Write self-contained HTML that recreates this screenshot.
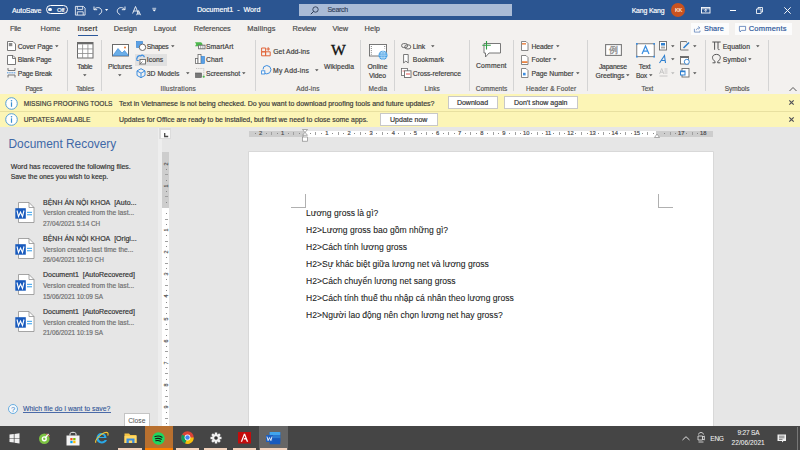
<!DOCTYPE html>
<html><head><meta charset="utf-8"><style>
html,body{margin:0;padding:0;width:800px;height:450px;overflow:hidden;background:#e6e6e6;font-family:"Liberation Sans", sans-serif;}
.t{position:absolute;white-space:nowrap;font-family:"Liberation Sans", sans-serif;-webkit-text-stroke:0.18px currentColor;}
svg{overflow:visible}
</style></head><body>

<div style="position:absolute;left:0px;top:0px;width:800px;height:20px;background:#2b5591;"></div>
<div class="t" style="left:12.1px;top:4.50px;height:11px;line-height:11px;font-size:7px;color:#ffffff;letter-spacing:-0.157px;">AutoSave</div>
<div style="position:absolute;left:45.6px;top:4.6px;width:22.5px;height:9.4px;box-sizing:border-box;border:1px solid #fff;border-radius:5px;"></div>
<div style="position:absolute;left:48.4px;top:7.7px;width:3.4px;height:3.4px;background:#fff;border-radius:50%;"></div>
<div class="t" style="left:56.9px;top:4.60px;height:10px;line-height:10px;font-size:6px;color:#ffffff;letter-spacing:-0.131px;">Off</div>
<svg style="position:absolute;left:75px;top:6px;" width="10.5" height="9.5" viewBox="0 0 10.5 9.5"><path d="M0.4 0.4h8l1.7 1.7v7h-9.7z M2.3 0.4v3h5.4v-3 M2.3 9.1v-3.3h5.9v3.3" fill="none" stroke="#fff" stroke-width="0.8"/></svg>
<svg style="position:absolute;left:92.5px;top:6px;" width="10" height="9" viewBox="0 0 10 9"><path d="M1 0.5v3.2h3.2 M1.2 3.5C2.5 1.5 6 0.8 7.8 2.8c1.8 2 0.8 4.8-2 5.8" fill="none" stroke="#fff" stroke-width="0.9"/></svg>
<svg style="position:absolute;left:105.2px;top:9px;" width="3.5" height="2.5" viewBox="0 0 3.5 2.5"><path d="M0 0h3.2l-1.6 2z" fill="#fff"/></svg>
<svg style="position:absolute;left:115.8px;top:6px;" width="10" height="9" viewBox="0 0 10 9"><path d="M9 0.5v3.2h-3.2 M8.8 3.5C7.5 1.5 4 0.8 2.2 2.8c-1.8 2-0.8 4.8 2 5.8" fill="none" stroke="#fff" stroke-width="0.9"/></svg>
<svg style="position:absolute;left:131.8px;top:6px;" width="9.5" height="9.5" viewBox="0 0 9.5 9.5"><path d="M0.6 7.5l2.9-7 2.9 7 M1.6 5h3.8 M4.6 9.2l2-4.6 2 4.6 M5.3 8h2.6" fill="none" stroke="#fff" stroke-width="0.85"/></svg>
<svg style="position:absolute;left:151.6px;top:8.4px;" width="4.5" height="3.6" viewBox="0 0 4.5 3.6"><path d="M0.3 0.3h3.9" stroke="#fff" stroke-width="0.7"/><path d="M0.3 1.5h3.9l-1.95 2z" fill="#fff"/></svg>
<div class="t" style="left:197px;top:4.50px;height:11px;line-height:11px;font-size:7.1px;color:#ffffff;">Document1&nbsp; -&nbsp; Word</div>
<div style="position:absolute;left:298.8px;top:3.5px;width:213.2px;height:12.5px;background:#a9bbd6;"></div>
<svg style="position:absolute;left:309.5px;top:5.5px;" width="9" height="9" viewBox="0 0 9 9"><circle cx="5.5" cy="3.5" r="2.7" fill="none" stroke="#2b3a55" stroke-width="0.9"/><path d="M3.6 5.4l-2.8 2.8" stroke="#2b3a55" stroke-width="1"/></svg>
<div class="t" style="left:327.5px;top:4.10px;height:11px;line-height:11px;font-size:7px;color:#34445f;letter-spacing:-0.313px;">Search</div>
<div class="t" style="left:631.7px;top:4.60px;height:11px;line-height:11px;font-size:6.9px;color:#ffffff;letter-spacing:-0.161px;">Kang Kang</div>
<div style="position:absolute;left:671.4px;top:3.1px;width:14px;height:14px;border-radius:50%;background:#c9521f;"></div>
<div class="t" style="left:675px;top:5.90px;height:9px;line-height:9px;font-size:5.6px;color:#ffe8dc;letter-spacing:-0.235px;">KK</div>
<svg style="position:absolute;left:701px;top:6.8px;" width="9.5" height="6.5" viewBox="0 0 9.5 6.5"><rect x="0.5" y="0.5" width="8.5" height="5.5" fill="none" stroke="#fff" stroke-width="0.9"/><path d="M0.5 1.8h8.5 M4.75 2.3v2.8 M3.4 3.6l1.35-1.3 1.35 1.3" fill="none" stroke="#fff" stroke-width="0.8"/></svg>
<div style="position:absolute;left:729.5px;top:9.6px;width:6.8px;height:0.9px;background:#fff;"></div>
<svg style="position:absolute;left:756px;top:6.8px;" width="7" height="7" viewBox="0 0 7 7"><path d="M0.5 2h4.5v4.5h-4.5z M2 2v-1.5h4.5v4.5h-1.5" fill="none" stroke="#fff" stroke-width="0.85"/></svg>
<svg style="position:absolute;left:783.5px;top:6.8px;" width="7" height="7" viewBox="0 0 7 7"><path d="M0.3 0.3l6.4 6.4 M6.7 0.3l-6.4 6.4" stroke="#fff" stroke-width="0.95"/></svg>
<div style="position:absolute;left:0px;top:20px;width:800px;height:74px;background:#f3f1ef;"></div>
<div class="t" style="left:10px;top:23.30px;height:12px;line-height:12px;font-size:7.4px;color:#4a4a4a;letter-spacing:-0.294px;">File</div>
<div class="t" style="left:40.5px;top:23.30px;height:12px;line-height:12px;font-size:7.4px;color:#4a4a4a;letter-spacing:0.065px;">Home</div>
<div class="t" style="left:77.5px;top:23.30px;height:12px;line-height:12px;font-size:7.4px;color:#303030;letter-spacing:0.249px;">Insert</div>
<div class="t" style="left:113.75px;top:23.30px;height:12px;line-height:12px;font-size:7.4px;color:#4a4a4a;letter-spacing:0.036px;">Design</div>
<div class="t" style="left:153.75px;top:23.30px;height:12px;line-height:12px;font-size:7.4px;color:#4a4a4a;letter-spacing:0.047px;">Layout</div>
<div class="t" style="left:193.7px;top:23.30px;height:12px;line-height:12px;font-size:7.4px;color:#4a4a4a;letter-spacing:-0.074px;">References</div>
<div class="t" style="left:247.3px;top:23.30px;height:12px;line-height:12px;font-size:7.4px;color:#4a4a4a;letter-spacing:0.144px;">Mailings</div>
<div class="t" style="left:292.6px;top:23.30px;height:12px;line-height:12px;font-size:7.4px;color:#4a4a4a;letter-spacing:-0.144px;">Review</div>
<div class="t" style="left:332.5px;top:23.30px;height:12px;line-height:12px;font-size:7.4px;color:#4a4a4a;letter-spacing:-0.077px;">View</div>
<div class="t" style="left:364.6px;top:23.30px;height:12px;line-height:12px;font-size:7.4px;color:#4a4a4a;letter-spacing:0.045px;">Help</div>
<div style="position:absolute;left:77.5px;top:34.6px;width:20.5px;height:1.6px;background:#2b579a;"></div>
<div style="position:absolute;left:690.8px;top:22.5px;width:38.4px;height:12px;background:#fcfcfc;"></div>
<svg style="position:absolute;left:694.2px;top:26px;" width="7" height="6.5" viewBox="0 0 7 6.5"><path d="M0.4 2.8v3.3h5.6v-1.6 M2.3 4.2c0.4-1.6 1.6-2.4 3.2-2.4 M4.3 0.4l1.6 1.4-1.6 1.4" fill="none" stroke="#5a7fb8" stroke-width="0.75"/></svg>
<div class="t" style="left:704px;top:23.00px;height:12px;line-height:12px;font-size:7.3px;color:#2b579a;letter-spacing:0.064px;">Share</div>
<div style="position:absolute;left:734.7px;top:22.5px;width:57.4px;height:12px;background:#fcfcfc;"></div>
<svg style="position:absolute;left:739.2px;top:26px;" width="7" height="6.5" viewBox="0 0 7 6.5"><path d="M0.4 0.4h6.2v4h-4l-1.6 1.6v-1.6h-0.6z" fill="none" stroke="#4a70b0" stroke-width="0.75"/></svg>
<div class="t" style="left:748.7px;top:23.00px;height:12px;line-height:12px;font-size:7.5px;color:#2b579a;letter-spacing:0.218px;">Comments</div>
<div style="position:absolute;left:66.75px;top:40px;width:1px;height:51px;background:#d4d4d4;"></div>
<div style="position:absolute;left:100.75px;top:40px;width:1px;height:51px;background:#d4d4d4;"></div>
<div style="position:absolute;left:254.9px;top:40px;width:1px;height:51px;background:#d4d4d4;"></div>
<div style="position:absolute;left:360.0px;top:40px;width:1px;height:51px;background:#d4d4d4;"></div>
<div style="position:absolute;left:394.1px;top:40px;width:1px;height:51px;background:#d4d4d4;"></div>
<div style="position:absolute;left:469.2px;top:40px;width:1px;height:51px;background:#d4d4d4;"></div>
<div style="position:absolute;left:513.1px;top:40px;width:1px;height:51px;background:#d4d4d4;"></div>
<div style="position:absolute;left:587.3px;top:40px;width:1px;height:51px;background:#d4d4d4;"></div>
<div style="position:absolute;left:704.5px;top:40px;width:1px;height:51px;background:#d4d4d4;"></div>
<div style="position:absolute;left:767.8px;top:40px;width:1px;height:51px;background:#d4d4d4;"></div>
<div class="t" style="left:17.8px;top:40.80px;height:11px;line-height:11px;font-size:6.8px;color:#404040;letter-spacing:-0.091px;">Cover Page</div>
<svg style="position:absolute;left:55.2px;top:45.199999999999996px;" width="3.6" height="2.4" viewBox="0 0 3.6 2.4"><path d="M0 0.2h3.6l-1.8 2z" fill="#555"/></svg>
<div class="t" style="left:17.8px;top:54.00px;height:11px;line-height:11px;font-size:6.8px;color:#404040;letter-spacing:-0.118px;">Blank Page</div>
<div class="t" style="left:17.8px;top:67.50px;height:11px;line-height:11px;font-size:6.8px;color:#404040;letter-spacing:-0.154px;">Page Break</div>
<div class="t" style="left:25.6px;top:84.20px;height:10px;line-height:10px;font-size:6.5px;color:#555555;letter-spacing:-0.366px;">Pages</div>
<div class="t" style="left:77.3px;top:60.50px;height:11px;line-height:11px;font-size:6.8px;color:#404040;letter-spacing:-0.231px;">Table</div>
<svg style="position:absolute;left:82.7px;top:73.9px;" width="3.6" height="2.4" viewBox="0 0 3.6 2.4"><path d="M0 0.2h3.6l-1.8 2z" fill="#555"/></svg>
<div class="t" style="left:76px;top:84.20px;height:10px;line-height:10px;font-size:6.5px;color:#555555;letter-spacing:-0.132px;">Tables</div>
<div class="t" style="left:107.9px;top:60.50px;height:11px;line-height:11px;font-size:6.8px;color:#404040;letter-spacing:-0.046px;">Pictures</div>
<svg style="position:absolute;left:117.7px;top:73.9px;" width="3.6" height="2.4" viewBox="0 0 3.6 2.4"><path d="M0 0.2h3.6l-1.8 2z" fill="#555"/></svg>
<div style="position:absolute;left:134.5px;top:54px;width:32.5px;height:11.5px;background:#e1e1e1;"></div>
<div class="t" style="left:146.8px;top:40.80px;height:11px;line-height:11px;font-size:6.8px;color:#404040;letter-spacing:-0.227px;">Shapes</div>
<svg style="position:absolute;left:170.7px;top:45.199999999999996px;" width="3.6" height="2.4" viewBox="0 0 3.6 2.4"><path d="M0 0.2h3.6l-1.8 2z" fill="#555"/></svg>
<div class="t" style="left:146.8px;top:54.00px;height:11px;line-height:11px;font-size:6.8px;color:#404040;letter-spacing:0.029px;">Icons</div>
<div class="t" style="left:146.8px;top:67.50px;height:11px;line-height:11px;font-size:6.8px;color:#404040;letter-spacing:0.022px;">3D Models</div>
<svg style="position:absolute;left:185.7px;top:71.9px;" width="3.6" height="2.4" viewBox="0 0 3.6 2.4"><path d="M0 0.2h3.6l-1.8 2z" fill="#555"/></svg>
<div class="t" style="left:205.9px;top:40.80px;height:11px;line-height:11px;font-size:6.8px;color:#404040;letter-spacing:0.097px;">SmartArt</div>
<div class="t" style="left:206px;top:54.00px;height:11px;line-height:11px;font-size:6.8px;color:#404040;letter-spacing:0.054px;">Chart</div>
<div class="t" style="left:206px;top:67.50px;height:11px;line-height:11px;font-size:6.8px;color:#404040;letter-spacing:-0.040px;">Screenshot</div>
<svg style="position:absolute;left:242.2px;top:71.9px;" width="3.6" height="2.4" viewBox="0 0 3.6 2.4"><path d="M0 0.2h3.6l-1.8 2z" fill="#555"/></svg>
<div class="t" style="left:160.6px;top:84.20px;height:10px;line-height:10px;font-size:6.5px;color:#555555;letter-spacing:0.194px;">Illustrations</div>
<div class="t" style="left:273.2px;top:46.00px;height:11px;line-height:11px;font-size:6.8px;color:#404040;letter-spacing:0.088px;">Get Add-ins</div>
<div class="t" style="left:273px;top:64.70px;height:11px;line-height:11px;font-size:6.8px;color:#404040;letter-spacing:0.256px;">My Add-ins</div>
<svg style="position:absolute;left:315.2px;top:68.9px;" width="3.6" height="2.4" viewBox="0 0 3.6 2.4"><path d="M0 0.2h3.6l-1.8 2z" fill="#555"/></svg>
<div class="t" style="left:324px;top:60.80px;height:11px;line-height:11px;font-size:6.8px;color:#404040;letter-spacing:0.058px;">Wikipedia</div>
<div class="t" style="left:296.2px;top:84.20px;height:10px;line-height:10px;font-size:6.5px;color:#555555;letter-spacing:0.209px;">Add-ins</div>
<div class="t" style="left:367.5px;top:60.80px;height:11px;line-height:11px;font-size:6.8px;color:#404040;letter-spacing:0.057px;">Online</div>
<div class="t" style="left:369px;top:69.80px;height:11px;line-height:11px;font-size:6.8px;color:#404040;letter-spacing:-0.054px;">Video</div>
<div class="t" style="left:368.5px;top:84.20px;height:10px;line-height:10px;font-size:6.5px;color:#555555;letter-spacing:0.199px;">Media</div>
<div class="t" style="left:412.8px;top:40.80px;height:11px;line-height:11px;font-size:6.8px;color:#404040;letter-spacing:-0.069px;">Link</div>
<svg style="position:absolute;left:431.2px;top:45.199999999999996px;" width="3.6" height="2.4" viewBox="0 0 3.6 2.4"><path d="M0 0.2h3.6l-1.8 2z" fill="#555"/></svg>
<div class="t" style="left:412.8px;top:54.00px;height:11px;line-height:11px;font-size:6.8px;color:#404040;letter-spacing:0.074px;">Bookmark</div>
<div class="t" style="left:412.8px;top:67.50px;height:11px;line-height:11px;font-size:6.8px;color:#404040;letter-spacing:-0.037px;">Cross-reference</div>
<div class="t" style="left:424.6px;top:84.20px;height:10px;line-height:10px;font-size:6.5px;color:#555555;letter-spacing:-0.015px;">Links</div>
<div class="t" style="left:476px;top:60.30px;height:11px;line-height:11px;font-size:6.8px;color:#404040;letter-spacing:0.175px;">Comment</div>
<div class="t" style="left:475.8px;top:84.20px;height:10px;line-height:10px;font-size:6.5px;color:#555555;letter-spacing:0.009px;">Comments</div>
<div class="t" style="left:531.5px;top:40.80px;height:11px;line-height:11px;font-size:6.8px;color:#404040;letter-spacing:-0.101px;">Header</div>
<svg style="position:absolute;left:555.7px;top:45.199999999999996px;" width="3.6" height="2.4" viewBox="0 0 3.6 2.4"><path d="M0 0.2h3.6l-1.8 2z" fill="#555"/></svg>
<div class="t" style="left:531.5px;top:54.00px;height:11px;line-height:11px;font-size:6.8px;color:#404040;letter-spacing:-0.026px;">Footer</div>
<svg style="position:absolute;left:553.2px;top:58.4px;" width="3.6" height="2.4" viewBox="0 0 3.6 2.4"><path d="M0 0.2h3.6l-1.8 2z" fill="#555"/></svg>
<div class="t" style="left:531.5px;top:67.50px;height:11px;line-height:11px;font-size:6.8px;color:#404040;letter-spacing:0.004px;">Page Number</div>
<svg style="position:absolute;left:576.2px;top:71.9px;" width="3.6" height="2.4" viewBox="0 0 3.6 2.4"><path d="M0 0.2h3.6l-1.8 2z" fill="#555"/></svg>
<div class="t" style="left:526px;top:84.20px;height:10px;line-height:10px;font-size:6.5px;color:#555555;letter-spacing:0.143px;">Header &amp; Footer</div>
<div class="t" style="left:598.9px;top:60.70px;height:11px;line-height:11px;font-size:6.8px;color:#404040;letter-spacing:-0.186px;">Japanese</div>
<div class="t" style="left:595.5px;top:69.60px;height:11px;line-height:11px;font-size:6.8px;color:#404040;letter-spacing:-0.065px;">Greetings</div>
<svg style="position:absolute;left:625.7px;top:73.9px;" width="3.6" height="2.4" viewBox="0 0 3.6 2.4"><path d="M0 0.2h3.6l-1.8 2z" fill="#555"/></svg>
<div class="t" style="left:638.8px;top:60.70px;height:11px;line-height:11px;font-size:6.8px;color:#404040;letter-spacing:-0.193px;">Text</div>
<div class="t" style="left:636px;top:69.60px;height:11px;line-height:11px;font-size:6.8px;color:#404040;letter-spacing:-0.239px;">Box</div>
<svg style="position:absolute;left:649.2px;top:73.9px;" width="3.6" height="2.4" viewBox="0 0 3.6 2.4"><path d="M0 0.2h3.6l-1.8 2z" fill="#555"/></svg>
<svg style="position:absolute;left:670.7px;top:45.199999999999996px;" width="3.6" height="2.4" viewBox="0 0 3.6 2.4"><path d="M0 0.2h3.6l-1.8 2z" fill="#555"/></svg>
<svg style="position:absolute;left:670.7px;top:58.4px;" width="3.6" height="2.4" viewBox="0 0 3.6 2.4"><path d="M0 0.2h3.6l-1.8 2z" fill="#555"/></svg>
<svg style="position:absolute;left:670.7px;top:71.9px;" width="3.6" height="2.4" viewBox="0 0 3.6 2.4"><path d="M0 0.2h3.6l-1.8 2z" fill="#bbb"/></svg>
<svg style="position:absolute;left:693.2px;top:45.199999999999996px;" width="3.6" height="2.4" viewBox="0 0 3.6 2.4"><path d="M0 0.2h3.6l-1.8 2z" fill="#555"/></svg>
<svg style="position:absolute;left:693.2px;top:71.9px;" width="3.6" height="2.4" viewBox="0 0 3.6 2.4"><path d="M0 0.2h3.6l-1.8 2z" fill="#555"/></svg>
<div class="t" style="left:641.4px;top:84.20px;height:10px;line-height:10px;font-size:6.5px;color:#555555;letter-spacing:-0.005px;">Text</div>
<div class="t" style="left:722.8px;top:40.80px;height:11px;line-height:11px;font-size:6.8px;color:#404040;letter-spacing:0.044px;">Equation</div>
<svg style="position:absolute;left:756.2px;top:45.199999999999996px;" width="3.6" height="2.4" viewBox="0 0 3.6 2.4"><path d="M0 0.2h3.6l-1.8 2z" fill="#555"/></svg>
<div class="t" style="left:722.8px;top:54.00px;height:11px;line-height:11px;font-size:6.8px;color:#404040;letter-spacing:0.137px;">Symbol</div>
<svg style="position:absolute;left:748.2px;top:58.4px;" width="3.6" height="2.4" viewBox="0 0 3.6 2.4"><path d="M0 0.2h3.6l-1.8 2z" fill="#555"/></svg>
<div class="t" style="left:724.7px;top:84.20px;height:10px;line-height:10px;font-size:6.5px;color:#555555;letter-spacing:-0.018px;">Symbols</div>
<svg style="position:absolute;left:788.8px;top:87px;" width="8" height="5" viewBox="0 0 8 5"><path d="M0.5 4l3.5-3.5 3.5 3.5" fill="none" stroke="#444" stroke-width="0.9"/></svg>
<svg style="position:absolute;left:7px;top:41px;" width="9" height="10" viewBox="0 0 9 10"><path d="M0.5 0.5h5.5l2.5 2.5v6.5h-8z" fill="#fff" stroke="#6a6a6a" stroke-width="0.9"/><rect x="1.8" y="2" width="3.5" height="3.2" fill="#8a8a8a"/></svg>
<svg style="position:absolute;left:7px;top:54.5px;" width="9" height="10" viewBox="0 0 9 10"><path d="M0.5 0.5h5.5l2.5 2.5v6.5h-8z M5.5 0.5v3h3" fill="#fff" stroke="#6a6a6a" stroke-width="0.9"/></svg>
<svg style="position:absolute;left:7px;top:67.5px;" width="9" height="10" viewBox="0 0 9 10"><path d="M1 0v2.5h7v-2.5 M1 9.5v-2.5h7v2.5" fill="none" stroke="#6a6a6a" stroke-width="0.9"/><path d="M0 4.8h9" stroke="#3d8ee0" stroke-width="0.9" stroke-dasharray="1.5 0.7"/></svg>
<svg style="position:absolute;left:76.5px;top:42.2px;" width="16.5" height="16.5" viewBox="0 0 16.5 16.5"><rect x="0.5" y="0.5" width="15.5" height="15.5" fill="#fff" stroke="#6a6a6a" stroke-width="1"/><rect x="0.5" y="0.5" width="15.5" height="1.8" fill="#6a6a6a"/><path d="M0.5 6.9h15.5 M0.5 11.5h15.5 M5.6 2.3v13.7 M10.9 2.3v13.7" stroke="#8a8a8a" stroke-width="0.8"/></svg>
<svg style="position:absolute;left:112px;top:44px;" width="17" height="12.5" viewBox="0 0 17 12.5"><rect x="0.5" y="0.5" width="16" height="11.5" fill="#fff" stroke="#6a6a6a" stroke-width="1"/><path d="M1 11.5l5-7 4 4.5 2.5-2.5 4 5z" fill="#6aaee8" stroke="#2f80d0" stroke-width="0.6"/><circle cx="13" cy="3.6" r="1" fill="#e8772e"/></svg>
<svg style="position:absolute;left:135.5px;top:41px;" width="11" height="10" viewBox="0 0 11 10"><rect x="0.5" y="0.5" width="6" height="6" fill="#5aa0e6" stroke="#2f80d0" stroke-width="0.6"/><circle cx="6.5" cy="6.3" r="3.2" fill="#fff" stroke="#6a6a6a" stroke-width="1"/></svg>
<svg style="position:absolute;left:135.5px;top:54px;" width="11" height="11" viewBox="0 0 11 11"><path d="M1 4.5c0-2 2-3.5 3.8-2.5 1-1.5 3.5-0.8 3.5 1.2" fill="none" stroke="#3d8ee0" stroke-width="1.3"/><path d="M0.8 4v2.5h2" fill="none" stroke="#3d8ee0" stroke-width="1"/><rect x="4" y="5.5" width="5.5" height="4.5" fill="#fff" stroke="#6a6a6a" stroke-width="0.9"/><path d="M3.5 10.5l3-3" stroke="#6a6a6a" stroke-width="0.8"/></svg>
<svg style="position:absolute;left:135.5px;top:67.5px;" width="10" height="10" viewBox="0 0 10 10"><path d="M5 0.7l4 2.2v4.5l-4 2.3-4-2.3v-4.5z M1 2.9l4 2.3 4-2.3 M5 5.2v4.5" fill="none" stroke="#3d8ee0" stroke-width="1"/></svg>
<svg style="position:absolute;left:194.5px;top:42px;" width="11" height="7.5" viewBox="0 0 11 7.5"><path d="M0 0.2h6.2l1.5 2-1.5 2h-6.2l1.2-2z" fill="#4cb84c"/><rect x="3.6" y="3.2" width="6.4" height="3.6" fill="#fff" stroke="#6a6a6a" stroke-width="0.9"/><path d="M5.7 3.2v3.6 M7.9 3.2v3.6" stroke="#6a6a6a" stroke-width="0.6"/></svg>
<svg style="position:absolute;left:195px;top:54px;" width="10" height="10" viewBox="0 0 10 10"><rect x="0.5" y="4.5" width="2.5" height="5" fill="#fff" stroke="#6a6a6a" stroke-width="0.8"/><rect x="3" y="0.5" width="3" height="9" fill="#fff" stroke="#6a6a6a" stroke-width="0.8"/><rect x="6.5" y="2.5" width="3" height="7" fill="#5aa0e6" stroke="#2f80d0" stroke-width="0.6"/></svg>
<svg style="position:absolute;left:195px;top:68px;" width="10" height="10" viewBox="0 0 10 10"><path d="M1 0.5h7.5 M8.8 0.5v7" stroke="#aaa" stroke-width="0.7" stroke-dasharray="1 0.8"/><rect x="0.5" y="5" width="6" height="4.5" fill="#777" stroke="#555" stroke-width="0.6"/><circle cx="8.7" cy="8.7" r="1.1" fill="#4cb84c"/></svg>
<svg style="position:absolute;left:261.3px;top:46.8px;" width="10" height="9.5" viewBox="0 0 10 9.5"><path d="M0.6 1h4v3.8h-4z M0.6 4.8h4v4h-4z M4.6 4.8h4.6v4h-4.6z" fill="none" stroke="#e0653a" stroke-width="1"/><path d="M7.2 0.2v3.6 M5.4 2h3.6" stroke="#e0653a" stroke-width="1"/></svg>
<svg style="position:absolute;left:261.3px;top:64.5px;" width="11" height="10" viewBox="0 0 11 10"><path d="M2 4.5l0.8-2.8 3-1.2 3 1.2 1.2 3-1.2 3-3 1.2-2-0.8" fill="none" stroke="#3d8ee0" stroke-width="1"/><rect x="0.6" y="5.8" width="3.2" height="3.2" fill="#fff" stroke="#3d8ee0" stroke-width="0.9"/></svg>
<div class="t" style="left:331.3px;top:38.50px;height:23px;line-height:23px;font-size:14.5px;color:#111111;font-family:'Liberation Serif',serif;transform:scaleX(1.08);transform-origin:left;-webkit-text-stroke:0.35px #111;">W</div>
<svg style="position:absolute;left:368.5px;top:44px;" width="20" height="16" viewBox="0 0 20 16"><rect x="0.5" y="0.5" width="17" height="11.5" fill="#fff" stroke="#6a6a6a" stroke-width="0.9"/><path d="M2.3 2v9 M15.7 2v2.5" stroke="#6a6a6a" stroke-width="1" stroke-dasharray="0.9 1.2"/><circle cx="14" cy="11.2" r="4.5" fill="#3d9be3"/><path d="M14 6.9v8.6 M9.6 11.2h8.8 M10.3 9h7.4 M10.3 13.4h7.4" stroke="#e8f4fc" stroke-width="0.5"/><ellipse cx="14" cy="11.2" rx="2" ry="4.3" fill="none" stroke="#e8f4fc" stroke-width="0.5"/></svg>
<svg style="position:absolute;left:400.5px;top:43px;" width="11" height="6.5" viewBox="0 0 11 6.5"><rect x="0.6" y="0.6" width="6" height="4" rx="2" fill="none" stroke="#6a6a6a" stroke-width="1"/><rect x="3.8" y="1.9" width="6" height="4" rx="2" fill="none" stroke="#6a6a6a" stroke-width="1"/></svg>
<svg style="position:absolute;left:402.5px;top:54.3px;" width="6" height="9.5" viewBox="0 0 6 9.5"><path d="M0.6 0.5h4.6v8.5l-2.3-2-2.3 2z" fill="#fff" stroke="#6a6a6a" stroke-width="0.9"/></svg>
<svg style="position:absolute;left:400.5px;top:67.8px;" width="11" height="10" viewBox="0 0 11 10"><rect x="0.5" y="0.5" width="6" height="7" fill="#fff" stroke="#6a6a6a" stroke-width="0.8"/><rect x="3.5" y="2.8" width="6.5" height="6.7" fill="#fff" stroke="#6a6a6a" stroke-width="0.9"/><path d="M5 6h4" stroke="#e04040" stroke-width="0.9"/><path d="M1.5 3h2" stroke="#e04040" stroke-width="0.6"/></svg>
<svg style="position:absolute;left:482px;top:41px;" width="19" height="16.5" viewBox="0 0 19 16.5"><path d="M2 2.5h16.5v9.5h-11.5l-3.5 4v-4h-1.5z" fill="#fff" stroke="#6a6a6a" stroke-width="0.9"/><path d="M4.5 0v8.5 M0.3 4.3h8.5" stroke="#2ea043" stroke-width="1.1"/></svg>
<svg style="position:absolute;left:520.8px;top:41px;" width="7.5" height="10" viewBox="0 0 7.5 10"><path d="M0.5 0.5h4.5l2 2v7h-6.5z" fill="#fff" stroke="#6a6a6a" stroke-width="0.8"/><rect x="1" y="2.2" width="4" height="1.3" fill="#e8772e"/></svg>
<svg style="position:absolute;left:520.8px;top:54.5px;" width="7.5" height="10" viewBox="0 0 7.5 10"><path d="M0.5 0.5h4.5l2 2v7h-6.5z" fill="#fff" stroke="#6a6a6a" stroke-width="0.8"/><rect x="1" y="6.3" width="5.5" height="1.6" fill="#e8772e"/></svg>
<svg style="position:absolute;left:520.8px;top:68px;" width="7.5" height="10" viewBox="0 0 7.5 10"><path d="M0.5 0.5h4.5l2 2v7h-6.5z" fill="#fff" stroke="#6a6a6a" stroke-width="0.8"/><rect x="2" y="4.8" width="2.6" height="2.6" fill="#3d8ee0"/></svg>
<svg style="position:absolute;left:605px;top:44px;" width="17" height="12" viewBox="0 0 17 12"><rect x="0.6" y="0.6" width="15.8" height="10.8" fill="#fff" stroke="#7a7a7a" stroke-width="1.1"/><text x="8.5" y="9.3" font-size="8.5" fill="#8c8c8c" stroke="#8c8c8c" stroke-width="0.3" text-anchor="middle" font-family="Liberation Sans">例</text></svg>
<svg style="position:absolute;left:635.5px;top:43px;" width="19" height="14.5" viewBox="0 0 19 14.5"><rect x="0.8" y="0.8" width="17.4" height="12.9" fill="#fff" stroke="#606060" stroke-width="0.8"/><rect x="0" y="0" width="1.7" height="1.7" fill="#3d8ee0"/><rect x="17.3" y="0" width="1.7" height="1.7" fill="#3d8ee0"/><rect x="0" y="12.8" width="1.7" height="1.7" fill="#3d8ee0"/><rect x="17.3" y="12.8" width="1.7" height="1.7" fill="#3d8ee0"/><path d="M6 11l3.5-8 3.5 8 M7.2 8.2h4.6" fill="none" stroke="#3a8ee0" stroke-width="1.2"/></svg>
<svg style="position:absolute;left:659.3px;top:41px;" width="8" height="9.5" viewBox="0 0 8 9.5"><rect x="0.5" y="0.5" width="7" height="8.5" fill="#fff" stroke="#6a6a6a" stroke-width="0.9"/><rect x="2" y="2" width="4" height="2.5" fill="#2f80d0"/><rect x="2" y="5.5" width="4" height="2" fill="#aaa"/></svg>
<svg style="position:absolute;left:659.3px;top:55px;" width="8" height="8.5" viewBox="0 0 8 8.5"><path d="M0.5 8l5-7.5 1 7.5 M2 5.5h4.5" fill="none" stroke="#2f80d0" stroke-width="1.1"/></svg>
<svg style="position:absolute;left:659px;top:67.5px;" width="9" height="8.5" viewBox="0 0 9 8.5"><path d="M0.5 6l2.2-5.5 2.2 5.5 M1.3 4.2h2.8 M5.5 1h3 M5.5 3h3 M5.5 5h3 M0.5 8h8" fill="none" stroke="#bdbdbd" stroke-width="0.8"/></svg>
<svg style="position:absolute;left:680px;top:41px;" width="10" height="10" viewBox="0 0 10 10"><path d="M0.5 0.5h6v1 M0.5 0.5v8.5h8" fill="none" stroke="#6a6a6a" stroke-width="0.9"/><path d="M3.5 7l5.5-5.5" stroke="#2f80d0" stroke-width="1.6"/></svg>
<svg style="position:absolute;left:680px;top:54.5px;" width="10" height="9.5" viewBox="0 0 10 9.5"><rect x="0.5" y="1.5" width="8" height="7.5" fill="#fff" stroke="#6a6a6a" stroke-width="0.9"/><rect x="0.5" y="1.5" width="8" height="1.5" fill="#6a6a6a"/><circle cx="6.8" cy="6.8" r="2.5" fill="#fff" stroke="#2f80d0" stroke-width="0.9"/></svg>
<svg style="position:absolute;left:680px;top:67.5px;" width="10" height="9.5" viewBox="0 0 10 9.5"><rect x="2" y="0.5" width="7" height="8.5" fill="#fff" stroke="#6a6a6a" stroke-width="0.9"/><rect x="0.5" y="3" width="4.5" height="4" fill="#fff" stroke="#2f80d0" stroke-width="1"/><rect x="0.5" y="3" width="4.5" height="1.2" fill="#2f80d0"/></svg>
<svg style="position:absolute;left:711.8px;top:41px;" width="9" height="9" viewBox="0 0 9 9"><path d="M0.3 1h8.4 M2.6 1v7.8 M6 1v6.5c0 1 0.5 1.3 1.5 1.1" fill="none" stroke="#555" stroke-width="1"/></svg>
<svg style="position:absolute;left:711.8px;top:54.3px;" width="9" height="9.5" viewBox="0 0 9 9.5"><path d="M0.5 8.8h2.6v-1.3c-1.6-0.9-2.6-2.5-2.6-4.1 0-1.8 1.6-3 3.9-3s3.9 1.2 3.9 3c0 1.6-1 3.2-2.6 4.1v1.3h2.6" fill="none" stroke="#555" stroke-width="1"/></svg>
<div style="position:absolute;left:0px;top:94.2px;width:800px;height:33.3px;background:#fcf5b6;"></div>
<div style="position:absolute;left:0px;top:110.8px;width:800px;height:0.8px;background:#e8e0a0;"></div>
<svg style="position:absolute;left:5px;top:96.5px;" width="13" height="13" viewBox="0 0 13 13"><circle cx="6.5" cy="6.5" r="5.8" fill="#fff" stroke="#55a0d8" stroke-width="1"/><circle cx="6.5" cy="3.8" r="0.8" fill="#3b8fd0"/><rect x="5.9" y="5.3" width="1.2" height="4.5" fill="#3b8fd0"/></svg>
<svg style="position:absolute;left:788.9px;top:100.2px;" width="5" height="5" viewBox="0 0 5 5"><path d="M0.3 0.3l4.4 4.4 M4.7 0.3l-4.4 4.4" stroke="#505058" stroke-width="1.2"/></svg>
<svg style="position:absolute;left:5px;top:112.8px;" width="13" height="13" viewBox="0 0 13 13"><circle cx="6.5" cy="6.5" r="5.8" fill="#fff" stroke="#55a0d8" stroke-width="1"/><circle cx="6.5" cy="3.8" r="0.8" fill="#3b8fd0"/><rect x="5.9" y="5.3" width="1.2" height="4.5" fill="#3b8fd0"/></svg>
<svg style="position:absolute;left:788.9px;top:116.5px;" width="5" height="5" viewBox="0 0 5 5"><path d="M0.3 0.3l4.4 4.4 M4.7 0.3l-4.4 4.4" stroke="#505058" stroke-width="1.2"/></svg>
<div class="t" style="left:23.7px;top:97.90px;height:11px;line-height:11px;font-size:6.6px;color:#3a3a3a;">MISSING PROOFING TOOLS</div>
<div class="t" style="left:119px;top:98.10px;height:11px;line-height:11px;font-size:7.0px;color:#3a3a3a;">Text in Vietnamese is not being checked. Do you want to download proofing tools and future updates?</div>
<div class="t" style="left:23.7px;top:114.10px;height:11px;line-height:11px;font-size:6.6px;color:#3a3a3a;">UPDATES AVAILABLE</div>
<div class="t" style="left:119px;top:114.30px;height:11px;line-height:11px;font-size:6.92px;color:#3a3a3a;">Updates for Office are ready to be installed, but first we need to close some apps.</div>
<div class="t" style="left:447.5px;top:96px;width:50px;height:13px;line-height:11.5px;background:#fff;border:0.8px solid #c8c8c8;box-sizing:border-box;text-align:center;font-size:7px;color:#333;">Download</div>
<div class="t" style="left:504px;top:96px;width:73.5px;height:13px;line-height:11.5px;background:#fff;border:0.8px solid #c8c8c8;box-sizing:border-box;text-align:center;font-size:7px;color:#333;">Don&#39;t show again</div>
<div class="t" style="left:380px;top:112.5px;width:57.5px;height:13.5px;line-height:12.0px;background:#fff;border:0.8px solid #c8c8c8;box-sizing:border-box;text-align:center;font-size:7px;color:#333;">Update now</div>
<div style="position:absolute;left:0px;top:127.5px;width:800px;height:299px;background:#e6e6e6;"></div>
<div style="position:absolute;left:158.2px;top:127.5px;width:3.8px;height:299px;background:#eeeeee;"></div>
<div class="t" style="left:8.5px;top:134.80px;height:19px;line-height:19px;font-size:11.9px;color:#4068a6;-webkit-text-stroke:0;">Document Recovery</div>
<div class="t" style="left:10.7px;top:160.90px;height:11px;line-height:11px;font-size:7.0px;color:#333333;">Word has recovered the following files.</div>
<div class="t" style="left:10.7px;top:170.90px;height:11px;line-height:11px;font-size:6.78px;color:#333333;">Save the ones you wish to keep.</div>
<div class="t" style="left:43px;top:196.50px;height:11px;line-height:11px;font-size:7.0px;color:#333333;">BỆNH ÁN NỘI KHOA&nbsp; [Auto...</div>
<div class="t" style="left:43px;top:207.10px;height:11px;line-height:11px;font-size:6.72px;color:#707070;">Version created from the last...</div>
<div class="t" style="left:43px;top:218.80px;height:10px;line-height:10px;font-size:6.4px;color:#707070;">27/04/2021 5:14 CH</div>
<svg style="position:absolute;left:14.5px;top:201.5px;" width="20" height="21" viewBox="0 0 20 21"><path d="M3.5 0.5h10.5l5 5v15h-15.5z" fill="#fff" stroke="#8f8f8f" stroke-width="0.8"/><path d="M14 0.5v5h5" fill="none" stroke="#8f8f8f" stroke-width="0.8"/><rect x="0.3" y="6.2" width="10.5" height="10.5" fill="#185abd"/><path d="M2 8.5l1.5 6 2-4.5 2 4.5 1.5-6" fill="none" stroke="#fff" stroke-width="1.1"/><rect x="12" y="9.8" width="5" height="1.1" fill="#41a5ee"/><rect x="12" y="12.2" width="5" height="1.1" fill="#41a5ee"/></svg>
<div class="t" style="left:43px;top:233.10px;height:11px;line-height:11px;font-size:7.0px;color:#333333;">BỆNH ÁN NỘI KHOA&nbsp; [Origi...</div>
<div class="t" style="left:43px;top:243.70px;height:11px;line-height:11px;font-size:6.72px;color:#707070;">Version created last time the...</div>
<div class="t" style="left:43px;top:255.40px;height:10px;line-height:10px;font-size:6.4px;color:#707070;">26/04/2021 10:10 CH</div>
<svg style="position:absolute;left:14.5px;top:238.1px;" width="20" height="21" viewBox="0 0 20 21"><path d="M3.5 0.5h10.5l5 5v15h-15.5z" fill="#fff" stroke="#8f8f8f" stroke-width="0.8"/><path d="M14 0.5v5h5" fill="none" stroke="#8f8f8f" stroke-width="0.8"/><rect x="0.3" y="6.2" width="10.5" height="10.5" fill="#185abd"/><path d="M2 8.5l1.5 6 2-4.5 2 4.5 1.5-6" fill="none" stroke="#fff" stroke-width="1.1"/><rect x="12" y="9.8" width="5" height="1.1" fill="#41a5ee"/><rect x="12" y="12.2" width="5" height="1.1" fill="#41a5ee"/></svg>
<div class="t" style="left:43px;top:269.20px;height:11px;line-height:11px;font-size:7.0px;color:#333333;">Document1&nbsp; [AutoRecovered]</div>
<div class="t" style="left:43px;top:279.80px;height:11px;line-height:11px;font-size:6.72px;color:#707070;">Version created from the last...</div>
<div class="t" style="left:43px;top:291.50px;height:10px;line-height:10px;font-size:6.4px;color:#707070;">15/06/2021 10:09 SA</div>
<svg style="position:absolute;left:14.5px;top:274.2px;" width="20" height="21" viewBox="0 0 20 21"><path d="M3.5 0.5h10.5l5 5v15h-15.5z" fill="#fff" stroke="#8f8f8f" stroke-width="0.8"/><path d="M14 0.5v5h5" fill="none" stroke="#8f8f8f" stroke-width="0.8"/><rect x="0.3" y="6.2" width="10.5" height="10.5" fill="#185abd"/><path d="M2 8.5l1.5 6 2-4.5 2 4.5 1.5-6" fill="none" stroke="#fff" stroke-width="1.1"/><rect x="12" y="9.8" width="5" height="1.1" fill="#41a5ee"/><rect x="12" y="12.2" width="5" height="1.1" fill="#41a5ee"/></svg>
<div class="t" style="left:43px;top:305.90px;height:11px;line-height:11px;font-size:7.0px;color:#333333;">Document1&nbsp; [AutoRecovered]</div>
<div class="t" style="left:43px;top:316.50px;height:11px;line-height:11px;font-size:6.72px;color:#707070;">Version created from the last...</div>
<div class="t" style="left:43px;top:328.20px;height:10px;line-height:10px;font-size:6.4px;color:#707070;">21/06/2021 10:19 SA</div>
<svg style="position:absolute;left:14.5px;top:310.9px;" width="20" height="21" viewBox="0 0 20 21"><path d="M3.5 0.5h10.5l5 5v15h-15.5z" fill="#fff" stroke="#8f8f8f" stroke-width="0.8"/><path d="M14 0.5v5h5" fill="none" stroke="#8f8f8f" stroke-width="0.8"/><rect x="0.3" y="6.2" width="10.5" height="10.5" fill="#185abd"/><path d="M2 8.5l1.5 6 2-4.5 2 4.5 1.5-6" fill="none" stroke="#fff" stroke-width="1.1"/><rect x="12" y="9.8" width="5" height="1.1" fill="#41a5ee"/><rect x="12" y="12.2" width="5" height="1.1" fill="#41a5ee"/></svg>
<svg style="position:absolute;left:7.5px;top:403.5px;" width="10" height="10" viewBox="0 0 10 10"><circle cx="5" cy="5" r="4.5" fill="#f4f8fc" stroke="#5aa5dc" stroke-width="0.9"/><text x="5" y="7.7" font-size="7.5" font-family="Liberation Sans" fill="#2a78c0" text-anchor="middle">?</text></svg>
<div class="t" style="left:23px;top:403.00px;height:11px;line-height:11px;font-size:6.87px;color:#2f5496;-webkit-text-stroke:0.1px #2f5496;">Which file do I want to save?</div>
<div style="position:absolute;left:23px;top:412px;width:87.5px;height:0.6px;background:#4a6aa8;"></div>
<div style="position:absolute;left:159.4px;top:128.3px;width:12px;height:11px;background:#dcdcdc;"></div>
<div style="position:absolute;left:161.2px;top:130.4px;width:8.5px;height:7.5px;background:#fdfdfd;"></div>
<svg style="position:absolute;left:163.8px;top:132.6px;" width="5" height="4.5" viewBox="0 0 5 4.5"><path d="M0.7 0v3.5h3.5" fill="none" stroke="#4a4a4a" stroke-width="1.3"/></svg>
<div style="position:absolute;left:162px;top:151.6px;width:6.8px;height:275px;background:#ffffff;"></div>
<div style="position:absolute;left:162px;top:151.6px;width:6.8px;height:56.3px;background:#cdcdcd;"></div>
<div style="position:absolute;left:249px;top:130.8px;width:464px;height:6px;background:#ffffff;"></div>
<div style="position:absolute;left:249px;top:130.8px;width:55px;height:6px;background:#cdcdcd;"></div>
<div style="position:absolute;left:656.4px;top:130.8px;width:56.6px;height:6px;background:#cdcdcd;"></div>
<div style="position:absolute;left:254.60750000000002px;top:133.4px;width:0.8px;height:0.8px;background:#8a8a8a;"></div>
<div class="t" style="left:258.94px;top:129.30px;height:9px;line-height:9px;font-size:5.8px;color:#505050;">2</div>
<div style="position:absolute;left:265.67250000000007px;top:133.4px;width:0.8px;height:0.8px;background:#8a8a8a;"></div>
<div style="position:absolute;left:271.20500000000004px;top:132.4px;width:0.7px;height:2.6px;background:#a0a0a0;"></div>
<div style="position:absolute;left:276.73750000000007px;top:133.4px;width:0.8px;height:0.8px;background:#8a8a8a;"></div>
<div class="t" style="left:281.07px;top:129.30px;height:9px;line-height:9px;font-size:5.8px;color:#505050;">1</div>
<div style="position:absolute;left:287.80250000000007px;top:133.4px;width:0.8px;height:0.8px;background:#8a8a8a;"></div>
<div style="position:absolute;left:293.33500000000004px;top:132.4px;width:0.7px;height:2.6px;background:#a0a0a0;"></div>
<div style="position:absolute;left:298.86750000000006px;top:133.4px;width:0.8px;height:0.8px;background:#8a8a8a;"></div>
<div style="position:absolute;left:309.93250000000006px;top:133.4px;width:0.8px;height:0.8px;background:#8a8a8a;"></div>
<div style="position:absolute;left:315.46500000000003px;top:132.4px;width:0.7px;height:2.6px;background:#a0a0a0;"></div>
<div style="position:absolute;left:320.99750000000006px;top:133.4px;width:0.8px;height:0.8px;background:#8a8a8a;"></div>
<div class="t" style="left:325.33px;top:129.30px;height:9px;line-height:9px;font-size:5.8px;color:#505050;">1</div>
<div style="position:absolute;left:332.06250000000006px;top:133.4px;width:0.8px;height:0.8px;background:#8a8a8a;"></div>
<div style="position:absolute;left:337.595px;top:132.4px;width:0.7px;height:2.6px;background:#a0a0a0;"></div>
<div style="position:absolute;left:343.12750000000005px;top:133.4px;width:0.8px;height:0.8px;background:#8a8a8a;"></div>
<div class="t" style="left:347.46px;top:129.30px;height:9px;line-height:9px;font-size:5.8px;color:#505050;">2</div>
<div style="position:absolute;left:354.19250000000005px;top:133.4px;width:0.8px;height:0.8px;background:#8a8a8a;"></div>
<div style="position:absolute;left:359.725px;top:132.4px;width:0.7px;height:2.6px;background:#a0a0a0;"></div>
<div style="position:absolute;left:365.25750000000005px;top:133.4px;width:0.8px;height:0.8px;background:#8a8a8a;"></div>
<div class="t" style="left:369.59px;top:129.30px;height:9px;line-height:9px;font-size:5.8px;color:#505050;">3</div>
<div style="position:absolute;left:376.32250000000005px;top:133.4px;width:0.8px;height:0.8px;background:#8a8a8a;"></div>
<div style="position:absolute;left:381.855px;top:132.4px;width:0.7px;height:2.6px;background:#a0a0a0;"></div>
<div style="position:absolute;left:387.38750000000005px;top:133.4px;width:0.8px;height:0.8px;background:#8a8a8a;"></div>
<div class="t" style="left:391.71999999999997px;top:129.30px;height:9px;line-height:9px;font-size:5.8px;color:#505050;">4</div>
<div style="position:absolute;left:398.45250000000004px;top:133.4px;width:0.8px;height:0.8px;background:#8a8a8a;"></div>
<div style="position:absolute;left:403.985px;top:132.4px;width:0.7px;height:2.6px;background:#a0a0a0;"></div>
<div style="position:absolute;left:409.51750000000004px;top:133.4px;width:0.8px;height:0.8px;background:#8a8a8a;"></div>
<div class="t" style="left:413.84999999999997px;top:129.30px;height:9px;line-height:9px;font-size:5.8px;color:#505050;">5</div>
<div style="position:absolute;left:420.58250000000004px;top:133.4px;width:0.8px;height:0.8px;background:#8a8a8a;"></div>
<div style="position:absolute;left:426.115px;top:132.4px;width:0.7px;height:2.6px;background:#a0a0a0;"></div>
<div style="position:absolute;left:431.64750000000004px;top:133.4px;width:0.8px;height:0.8px;background:#8a8a8a;"></div>
<div class="t" style="left:435.98px;top:129.30px;height:9px;line-height:9px;font-size:5.8px;color:#505050;">6</div>
<div style="position:absolute;left:442.7125000000001px;top:133.4px;width:0.8px;height:0.8px;background:#8a8a8a;"></div>
<div style="position:absolute;left:448.24500000000006px;top:132.4px;width:0.7px;height:2.6px;background:#a0a0a0;"></div>
<div style="position:absolute;left:453.7775000000001px;top:133.4px;width:0.8px;height:0.8px;background:#8a8a8a;"></div>
<div class="t" style="left:458.11px;top:129.30px;height:9px;line-height:9px;font-size:5.8px;color:#505050;">7</div>
<div style="position:absolute;left:464.8425000000001px;top:133.4px;width:0.8px;height:0.8px;background:#8a8a8a;"></div>
<div style="position:absolute;left:470.37500000000006px;top:132.4px;width:0.7px;height:2.6px;background:#a0a0a0;"></div>
<div style="position:absolute;left:475.9075000000001px;top:133.4px;width:0.8px;height:0.8px;background:#8a8a8a;"></div>
<div class="t" style="left:480.24px;top:129.30px;height:9px;line-height:9px;font-size:5.8px;color:#505050;">8</div>
<div style="position:absolute;left:486.9725000000001px;top:133.4px;width:0.8px;height:0.8px;background:#8a8a8a;"></div>
<div style="position:absolute;left:492.50500000000005px;top:132.4px;width:0.7px;height:2.6px;background:#a0a0a0;"></div>
<div style="position:absolute;left:498.0375000000001px;top:133.4px;width:0.8px;height:0.8px;background:#8a8a8a;"></div>
<div class="t" style="left:502.37px;top:129.30px;height:9px;line-height:9px;font-size:5.8px;color:#505050;">9</div>
<div style="position:absolute;left:509.1025000000001px;top:133.4px;width:0.8px;height:0.8px;background:#8a8a8a;"></div>
<div style="position:absolute;left:514.6350000000001px;top:132.4px;width:0.7px;height:2.6px;background:#a0a0a0;"></div>
<div style="position:absolute;left:520.1675px;top:133.4px;width:0.8px;height:0.8px;background:#8a8a8a;"></div>
<div class="t" style="left:523.0px;top:129.30px;height:9px;line-height:9px;font-size:5.8px;color:#505050;">10</div>
<div style="position:absolute;left:531.2325000000001px;top:133.4px;width:0.8px;height:0.8px;background:#8a8a8a;"></div>
<div style="position:absolute;left:536.7650000000001px;top:132.4px;width:0.7px;height:2.6px;background:#a0a0a0;"></div>
<div style="position:absolute;left:542.2975px;top:133.4px;width:0.8px;height:0.8px;background:#8a8a8a;"></div>
<div class="t" style="left:545.13px;top:129.30px;height:9px;line-height:9px;font-size:5.8px;color:#505050;">11</div>
<div style="position:absolute;left:553.3625000000001px;top:133.4px;width:0.8px;height:0.8px;background:#8a8a8a;"></div>
<div style="position:absolute;left:558.8950000000001px;top:132.4px;width:0.7px;height:2.6px;background:#a0a0a0;"></div>
<div style="position:absolute;left:564.4275px;top:133.4px;width:0.8px;height:0.8px;background:#8a8a8a;"></div>
<div class="t" style="left:567.26px;top:129.30px;height:9px;line-height:9px;font-size:5.8px;color:#505050;">12</div>
<div style="position:absolute;left:575.4925000000001px;top:133.4px;width:0.8px;height:0.8px;background:#8a8a8a;"></div>
<div style="position:absolute;left:581.0250000000001px;top:132.4px;width:0.7px;height:2.6px;background:#a0a0a0;"></div>
<div style="position:absolute;left:586.5575px;top:133.4px;width:0.8px;height:0.8px;background:#8a8a8a;"></div>
<div class="t" style="left:589.39px;top:129.30px;height:9px;line-height:9px;font-size:5.8px;color:#505050;">13</div>
<div style="position:absolute;left:597.6225000000001px;top:133.4px;width:0.8px;height:0.8px;background:#8a8a8a;"></div>
<div style="position:absolute;left:603.1550000000001px;top:132.4px;width:0.7px;height:2.6px;background:#a0a0a0;"></div>
<div style="position:absolute;left:608.6875px;top:133.4px;width:0.8px;height:0.8px;background:#8a8a8a;"></div>
<div class="t" style="left:611.52px;top:129.30px;height:9px;line-height:9px;font-size:5.8px;color:#505050;">14</div>
<div style="position:absolute;left:619.7525px;top:133.4px;width:0.8px;height:0.8px;background:#8a8a8a;"></div>
<div style="position:absolute;left:625.2850000000001px;top:132.4px;width:0.7px;height:2.6px;background:#a0a0a0;"></div>
<div style="position:absolute;left:630.8175px;top:133.4px;width:0.8px;height:0.8px;background:#8a8a8a;"></div>
<div class="t" style="left:633.65px;top:129.30px;height:9px;line-height:9px;font-size:5.8px;color:#505050;">15</div>
<div style="position:absolute;left:641.8825px;top:133.4px;width:0.8px;height:0.8px;background:#8a8a8a;"></div>
<div style="position:absolute;left:647.4150000000001px;top:132.4px;width:0.7px;height:2.6px;background:#a0a0a0;"></div>
<div style="position:absolute;left:652.9475px;top:133.4px;width:0.8px;height:0.8px;background:#8a8a8a;"></div>
<div style="position:absolute;left:664.0125px;top:133.4px;width:0.8px;height:0.8px;background:#8a8a8a;"></div>
<div style="position:absolute;left:669.5450000000001px;top:132.4px;width:0.7px;height:2.6px;background:#a0a0a0;"></div>
<div style="position:absolute;left:675.0775px;top:133.4px;width:0.8px;height:0.8px;background:#8a8a8a;"></div>
<div class="t" style="left:677.91px;top:129.30px;height:9px;line-height:9px;font-size:5.8px;color:#505050;">17</div>
<div style="position:absolute;left:686.1425px;top:133.4px;width:0.8px;height:0.8px;background:#8a8a8a;"></div>
<div style="position:absolute;left:691.6750000000001px;top:132.4px;width:0.7px;height:2.6px;background:#a0a0a0;"></div>
<div style="position:absolute;left:697.2075px;top:133.4px;width:0.8px;height:0.8px;background:#8a8a8a;"></div>
<div class="t" style="left:700.04px;top:129.30px;height:9px;line-height:9px;font-size:5.8px;color:#505050;">18</div>
<svg style="position:absolute;left:302.3px;top:129px;" width="6" height="13" viewBox="0 0 6 13"><path d="M0.5 0.5h5l-2.5 3z M0.5 6.3h5l-2.5-3z" fill="#fff" stroke="#888" stroke-width="0.7"/><rect x="0.5" y="8" width="5" height="4.2" fill="#fff" stroke="#888" stroke-width="0.7"/></svg>
<svg style="position:absolute;left:654.2px;top:133px;" width="6" height="5" viewBox="0 0 6 5"><path d="M0.5 4.5h5l-2.5-3.5z" fill="#fff" stroke="#888" stroke-width="0.7"/></svg>
<div class="t" style="left:163.2px;top:159.64px;width:6px;height:8px;line-height:8px;font-size:5.4px;color:#505050;text-align:center;transform:rotate(-90deg);">2</div>
<div style="position:absolute;left:165.8px;top:168.7725px;width:0.8px;height:0.8px;background:#8a8a8a;"></div>
<div style="position:absolute;left:165px;top:174.305px;width:2.8px;height:0.8px;background:#a0a0a0;"></div>
<div style="position:absolute;left:165.8px;top:179.8375px;width:0.8px;height:0.8px;background:#8a8a8a;"></div>
<div class="t" style="left:163.2px;top:181.77px;width:6px;height:8px;line-height:8px;font-size:5.4px;color:#505050;text-align:center;transform:rotate(-90deg);">1</div>
<div style="position:absolute;left:165.8px;top:190.9025px;width:0.8px;height:0.8px;background:#8a8a8a;"></div>
<div style="position:absolute;left:165px;top:196.435px;width:2.8px;height:0.8px;background:#a0a0a0;"></div>
<div style="position:absolute;left:165.8px;top:201.9675px;width:0.8px;height:0.8px;background:#8a8a8a;"></div>
<div style="position:absolute;left:165.8px;top:213.0325px;width:0.8px;height:0.8px;background:#8a8a8a;"></div>
<div style="position:absolute;left:165px;top:218.565px;width:2.8px;height:0.8px;background:#a0a0a0;"></div>
<div style="position:absolute;left:165.8px;top:224.0975px;width:0.8px;height:0.8px;background:#8a8a8a;"></div>
<div class="t" style="left:163.2px;top:226.03px;width:6px;height:8px;line-height:8px;font-size:5.4px;color:#505050;text-align:center;transform:rotate(-90deg);">1</div>
<div style="position:absolute;left:165.8px;top:235.1625px;width:0.8px;height:0.8px;background:#8a8a8a;"></div>
<div style="position:absolute;left:165px;top:240.695px;width:2.8px;height:0.8px;background:#a0a0a0;"></div>
<div style="position:absolute;left:165.8px;top:246.2275px;width:0.8px;height:0.8px;background:#8a8a8a;"></div>
<div class="t" style="left:163.2px;top:248.16px;width:6px;height:8px;line-height:8px;font-size:5.4px;color:#505050;text-align:center;transform:rotate(-90deg);">2</div>
<div style="position:absolute;left:165.8px;top:257.2925px;width:0.8px;height:0.8px;background:#8a8a8a;"></div>
<div style="position:absolute;left:165px;top:262.82500000000005px;width:2.8px;height:0.8px;background:#a0a0a0;"></div>
<div style="position:absolute;left:165.8px;top:268.3575px;width:0.8px;height:0.8px;background:#8a8a8a;"></div>
<div class="t" style="left:163.2px;top:270.29px;width:6px;height:8px;line-height:8px;font-size:5.4px;color:#505050;text-align:center;transform:rotate(-90deg);">3</div>
<div style="position:absolute;left:165.8px;top:279.42250000000007px;width:0.8px;height:0.8px;background:#8a8a8a;"></div>
<div style="position:absolute;left:165px;top:284.95500000000004px;width:2.8px;height:0.8px;background:#a0a0a0;"></div>
<div style="position:absolute;left:165.8px;top:290.48750000000007px;width:0.8px;height:0.8px;background:#8a8a8a;"></div>
<div class="t" style="left:163.2px;top:292.42px;width:6px;height:8px;line-height:8px;font-size:5.4px;color:#505050;text-align:center;transform:rotate(-90deg);">4</div>
<div style="position:absolute;left:165.8px;top:301.55250000000007px;width:0.8px;height:0.8px;background:#8a8a8a;"></div>
<div style="position:absolute;left:165px;top:307.08500000000004px;width:2.8px;height:0.8px;background:#a0a0a0;"></div>
<div style="position:absolute;left:165.8px;top:312.61750000000006px;width:0.8px;height:0.8px;background:#8a8a8a;"></div>
<div class="t" style="left:163.2px;top:314.55px;width:6px;height:8px;line-height:8px;font-size:5.4px;color:#505050;text-align:center;transform:rotate(-90deg);">5</div>
<div style="position:absolute;left:165.8px;top:323.68250000000006px;width:0.8px;height:0.8px;background:#8a8a8a;"></div>
<div style="position:absolute;left:165px;top:329.21500000000003px;width:2.8px;height:0.8px;background:#a0a0a0;"></div>
<div style="position:absolute;left:165.8px;top:334.74750000000006px;width:0.8px;height:0.8px;background:#8a8a8a;"></div>
<div class="t" style="left:163.2px;top:336.68px;width:6px;height:8px;line-height:8px;font-size:5.4px;color:#505050;text-align:center;transform:rotate(-90deg);">6</div>
<div style="position:absolute;left:165.8px;top:345.81250000000006px;width:0.8px;height:0.8px;background:#8a8a8a;"></div>
<div style="position:absolute;left:165px;top:351.345px;width:2.8px;height:0.8px;background:#a0a0a0;"></div>
<div style="position:absolute;left:165.8px;top:356.87750000000005px;width:0.8px;height:0.8px;background:#8a8a8a;"></div>
<div class="t" style="left:163.2px;top:358.81px;width:6px;height:8px;line-height:8px;font-size:5.4px;color:#505050;text-align:center;transform:rotate(-90deg);">7</div>
<div style="position:absolute;left:165.8px;top:367.94250000000005px;width:0.8px;height:0.8px;background:#8a8a8a;"></div>
<div style="position:absolute;left:165px;top:373.475px;width:2.8px;height:0.8px;background:#a0a0a0;"></div>
<div style="position:absolute;left:165.8px;top:379.00750000000005px;width:0.8px;height:0.8px;background:#8a8a8a;"></div>
<div class="t" style="left:163.2px;top:380.94px;width:6px;height:8px;line-height:8px;font-size:5.4px;color:#505050;text-align:center;transform:rotate(-90deg);">8</div>
<div style="position:absolute;left:165.8px;top:390.07250000000005px;width:0.8px;height:0.8px;background:#8a8a8a;"></div>
<div style="position:absolute;left:165px;top:395.605px;width:2.8px;height:0.8px;background:#a0a0a0;"></div>
<div style="position:absolute;left:165.8px;top:401.13750000000005px;width:0.8px;height:0.8px;background:#8a8a8a;"></div>
<div class="t" style="left:163.2px;top:403.07px;width:6px;height:8px;line-height:8px;font-size:5.4px;color:#505050;text-align:center;transform:rotate(-90deg);">9</div>
<div style="position:absolute;left:165.8px;top:412.20250000000004px;width:0.8px;height:0.8px;background:#8a8a8a;"></div>
<div style="position:absolute;left:165px;top:417.735px;width:2.8px;height:0.8px;background:#a0a0a0;"></div>
<div style="position:absolute;left:165.8px;top:423.26750000000004px;width:0.8px;height:0.8px;background:#8a8a8a;"></div>
<div style="position:absolute;left:249.3px;top:151.8px;width:463.7px;height:275px;background:#ffffff;box-shadow:0 0 0 0.7px #d2d2d2;"></div>
<div style="position:absolute;left:305px;top:194px;width:0.8px;height:13.5px;background:#b0b0b0;"></div>
<div style="position:absolute;left:291px;top:207px;width:14.5px;height:0.8px;background:#b0b0b0;"></div>
<div style="position:absolute;left:658px;top:194px;width:0.8px;height:13.5px;background:#b0b0b0;"></div>
<div style="position:absolute;left:658px;top:207px;width:14.5px;height:0.8px;background:#b0b0b0;"></div>
<div class="t" style="left:306px;top:206.30px;height:14px;line-height:14px;font-size:8.57px;color:#222222;-webkit-text-stroke:0.08px #222;">Lương gross là gì?</div>
<div class="t" style="left:306px;top:223.22px;height:14px;line-height:14px;font-size:8.57px;color:#222222;-webkit-text-stroke:0.08px #222;">H2&gt;Lương gross bao gồm những gì?</div>
<div class="t" style="left:306px;top:240.14px;height:14px;line-height:14px;font-size:8.57px;color:#222222;-webkit-text-stroke:0.08px #222;">H2&gt;Cách tính lương gross</div>
<div class="t" style="left:306px;top:257.06px;height:14px;line-height:14px;font-size:8.57px;color:#222222;-webkit-text-stroke:0.08px #222;">H2&gt;Sự khác biệt giữa lương net và lương gross</div>
<div class="t" style="left:306px;top:273.98px;height:14px;line-height:14px;font-size:8.57px;color:#222222;-webkit-text-stroke:0.08px #222;">H2&gt;Cách chuyển lương net sang gross</div>
<div class="t" style="left:306px;top:290.90px;height:14px;line-height:14px;font-size:8.57px;color:#222222;-webkit-text-stroke:0.08px #222;">H2&gt;Cách tính thuế thu nhập cá nhân theo lương gross</div>
<div class="t" style="left:306px;top:307.82px;height:14px;line-height:14px;font-size:8.57px;color:#222222;-webkit-text-stroke:0.08px #222;">H2&gt;Người lao động nên chọn lương net hay gross?</div>
<div class="t" style="left:123.5px;top:413px;width:26.7px;height:13.6px;line-height:14.6px;background:#fff;border:0.6px solid #c4c4c4;box-sizing:border-box;font-size:6.7px;color:#555;text-align:center;-webkit-text-stroke:0.05px #555;">Close</div>
<div style="position:absolute;left:0px;top:426.4px;width:800px;height:23.6px;background:#454545;"></div>
<div style="position:absolute;left:144.8px;top:426.4px;width:28.1px;height:23.6px;background:#b8702f;"></div>
<div style="position:absolute;left:259.3px;top:426.4px;width:28.4px;height:23.6px;background:#666666;"></div>
<div style="position:absolute;left:118px;top:448.3px;width:24px;height:1.7px;background:#f2d3bd;"></div>
<div style="position:absolute;left:175.6px;top:448.3px;width:23.200000000000017px;height:1.7px;background:#f2d3bd;"></div>
<div style="position:absolute;left:204.4px;top:448.3px;width:23.099999999999994px;height:1.7px;background:#f2d3bd;"></div>
<div style="position:absolute;left:233px;top:448.3px;width:23px;height:1.7px;background:#f2d3bd;"></div>
<div style="position:absolute;left:260px;top:448.3px;width:27px;height:1.7px;background:#f2d3bd;"></div>
<div style="position:absolute;left:144.8px;top:448.3px;width:28.1px;height:1.7px;background:#ff8000;"></div>
<svg style="position:absolute;left:8.5px;top:432.8px;" width="11" height="10.5" viewBox="0 0 11 10.5"><path d="M0.5 1.6l4.3-0.6v4h-4.3z M5.5 0.9l5-0.7v4.8h-5z M0.5 5.6h4.3v4l-4.3-0.6z M5.5 5.6h5v4.8l-5-0.7z" fill="#f0f0f0"/></svg>
<svg style="position:absolute;left:37.5px;top:431.5px;" width="13" height="13" viewBox="0 0 13 13"><circle cx="6.3" cy="6.8" r="5.3" fill="#7cc242"/><circle cx="6.3" cy="6.8" r="2.6" fill="#fff"/><circle cx="6.3" cy="6.8" r="1.2" fill="#7cc242"/><path d="M7 6l3.5-4" stroke="#fff" stroke-width="1.3"/><path d="M8.2 1.8l1.3 1 M10.5 4l1.5-0.5" stroke="#e05050" stroke-width="1"/></svg>
<svg style="position:absolute;left:65.5px;top:431.5px;" width="14" height="14" viewBox="0 0 14 14"><path d="M4 3.5v-1.5c0-1 1-1.7 3-1.7s3 0.7 3 1.7v1.5" fill="none" stroke="#f0f0f0" stroke-width="1"/><rect x="0.5" y="3.5" width="13" height="10" fill="#f4f4f4"/><rect x="4.3" y="6" width="2.3" height="2.3" fill="#f25022"/><rect x="7.2" y="6" width="2.3" height="2.3" fill="#7fba00"/><rect x="4.3" y="8.9" width="2.3" height="2.3" fill="#00a4ef"/><rect x="7.2" y="8.9" width="2.3" height="2.3" fill="#ffb900"/></svg>
<svg style="position:absolute;left:94.5px;top:431px;" width="14" height="14" viewBox="0 0 14 14"><path d="M1.5 7.5c0-3.5 2.2-5.5 5.2-5.5 3 0 4.8 2 4.8 5h-7.8c0 2.3 1.5 3.4 3.2 3.4 1.2 0 2.2-0.5 2.9-1.4h2.2c-0.9 2.2-2.8 3.4-5.2 3.4-3.2 0-5.3-2-5.3-4.9z M4.2 6h5c-0.2-1.5-1.1-2.3-2.5-2.3-1.4 0-2.3 0.8-2.5 2.3z" fill="#2aa9e8"/><path d="M0.8 11.8c-1-2 2.5-7.5 8.5-10 3.2-1.2 4.5 0.2 3.5 2.8" fill="none" stroke="#f4c430" stroke-width="1.1"/></svg>
<svg style="position:absolute;left:123.5px;top:432.8px;" width="13" height="10.5" viewBox="0 0 13 10.5"><path d="M0.5 0.5h4.5l1.3 1.5h6.2v8h-12z" fill="#f7c545"/><rect x="0.5" y="3" width="12" height="7" fill="#ffd866"/><rect x="2.5" y="5.5" width="8" height="4.5" fill="#3b8de0"/><rect x="4.8" y="7.5" width="3.4" height="2.5" fill="#ffd866"/></svg>
<svg style="position:absolute;left:152.1px;top:431.5px;" width="13" height="13" viewBox="0 0 13 13"><circle cx="6.5" cy="6.5" r="6.2" fill="#1ed760"/><path d="M3 4.6c2.3-0.8 5-0.6 7 0.6 M3.4 6.8c2-0.6 4.2-0.4 5.9 0.5 M3.8 8.8c1.6-0.4 3.2-0.3 4.7 0.4" fill="none" stroke="#191414" stroke-width="1.1" stroke-linecap="round"/></svg>
<svg style="position:absolute;left:181px;top:431px;" width="13" height="13" viewBox="0 0 13 13"><circle cx="6.5" cy="6.5" r="6.2" fill="#db4437"/><path d="M6.5 6.5l-5.4-3.1a6.2 6.2 0 0 0 3.1 9.1z" fill="#0f9d58"/><path d="M6.5 6.5h6.2a6.2 6.2 0 0 1-8.5 6l2.3-6z" fill="#f4c20d"/><circle cx="6.5" cy="6.5" r="2.9" fill="#fff"/><circle cx="6.5" cy="6.5" r="2.2" fill="#4285f4"/></svg>
<svg style="position:absolute;left:209.5px;top:432px;" width="12" height="12" viewBox="0 0 12 12"><g transform="translate(6,6)" fill="#f0f0f0"><circle r="3.8"/><rect x="-1.2" y="-5.5" width="2.4" height="11"/><rect x="-5.5" y="-1.2" width="11" height="2.4"/><rect x="-1.2" y="-5.5" width="2.4" height="11" transform="rotate(45)"/><rect x="-1.2" y="-5.5" width="2.4" height="11" transform="rotate(-45)"/><circle r="1.8" fill="#333"/></g></svg>
<svg style="position:absolute;left:238px;top:432px;" width="13" height="11.5" viewBox="0 0 13 11.5"><rect x="0" y="0" width="13" height="11.5" fill="#c40c0c"/><path d="M2.8 9.8l3.1-8h1.2l3.1 8h-1.4l-0.9-2.4h-2.2l0.6-1.4h1.1l-0.9-2.6-2.4 6.4z" fill="#fff"/></svg>
<svg style="position:absolute;left:266.2px;top:431.8px;" width="15" height="12.5" viewBox="0 0 15 12.5"><rect x="3.6" y="0" width="10.7" height="12.3" rx="0.6" fill="#185abd"/><rect x="3.6" y="0" width="10.7" height="3.2" rx="0.6" fill="#41a5ee"/><rect x="3.6" y="3.2" width="10.7" height="3.2" fill="#2b7cd3"/><rect x="3.6" y="6.4" width="10.7" height="3" fill="#185abd"/><rect x="0" y="3.1" width="7" height="6.9" rx="0.5" fill="#1d5fc0"/><path d="M1 4.6l1.1 4 1.4-3 1.4 3 1.1-4" fill="none" stroke="#fff" stroke-width="0.85"/></svg>
<svg style="position:absolute;left:682px;top:435.5px;" width="8" height="4.5" viewBox="0 0 8 4.5"><path d="M0.5 4l3.5-3.3 3.5 3.3" fill="none" stroke="#eee" stroke-width="0.9"/></svg>
<svg style="position:absolute;left:696.8px;top:432.3px;" width="8" height="11" viewBox="0 0 8 11"><path d="M1.5 2.5c0-1 1-2 2.5-2s2.5 1 2.5 2 M1 4h4.5v4h-4.5z M5.5 5l1.8-1v4l-1.8-1 M1.5 10h5" fill="none" stroke="#eee" stroke-width="0.8"/></svg>
<div class="t" style="left:710.3px;top:432.50px;height:11px;line-height:11px;font-size:6.6px;color:#f0f0f0;letter-spacing:-0.301px;-webkit-text-stroke:0.05px #fff;">ENG</div>
<div class="t" style="left:737.5px;top:427.80px;height:10px;line-height:10px;font-size:6.5px;color:#f0f0f0;letter-spacing:-0.175px;-webkit-text-stroke:0.05px #fff;">9:27 SA</div>
<div class="t" style="left:731.5px;top:438.20px;height:10px;line-height:10px;font-size:6.5px;color:#f0f0f0;letter-spacing:0.077px;-webkit-text-stroke:0.05px #fff;">22/06/2021</div>
<svg style="position:absolute;left:776.5px;top:434px;" width="9.5" height="9" viewBox="0 0 9.5 9"><path d="M0.5 0.5h8.5v6.5h-2.5l-1.5 1.5v-1.5h-4.5z" fill="#f0f0f0"/><path d="M2 2.2h5.5 M2 3.8h5.5 M2 5.4h3.5" stroke="#333" stroke-width="0.6"/></svg>
<div style="position:absolute;left:796.5px;top:427px;width:0.8px;height:23px;background:#777;"></div>
</body></html>
